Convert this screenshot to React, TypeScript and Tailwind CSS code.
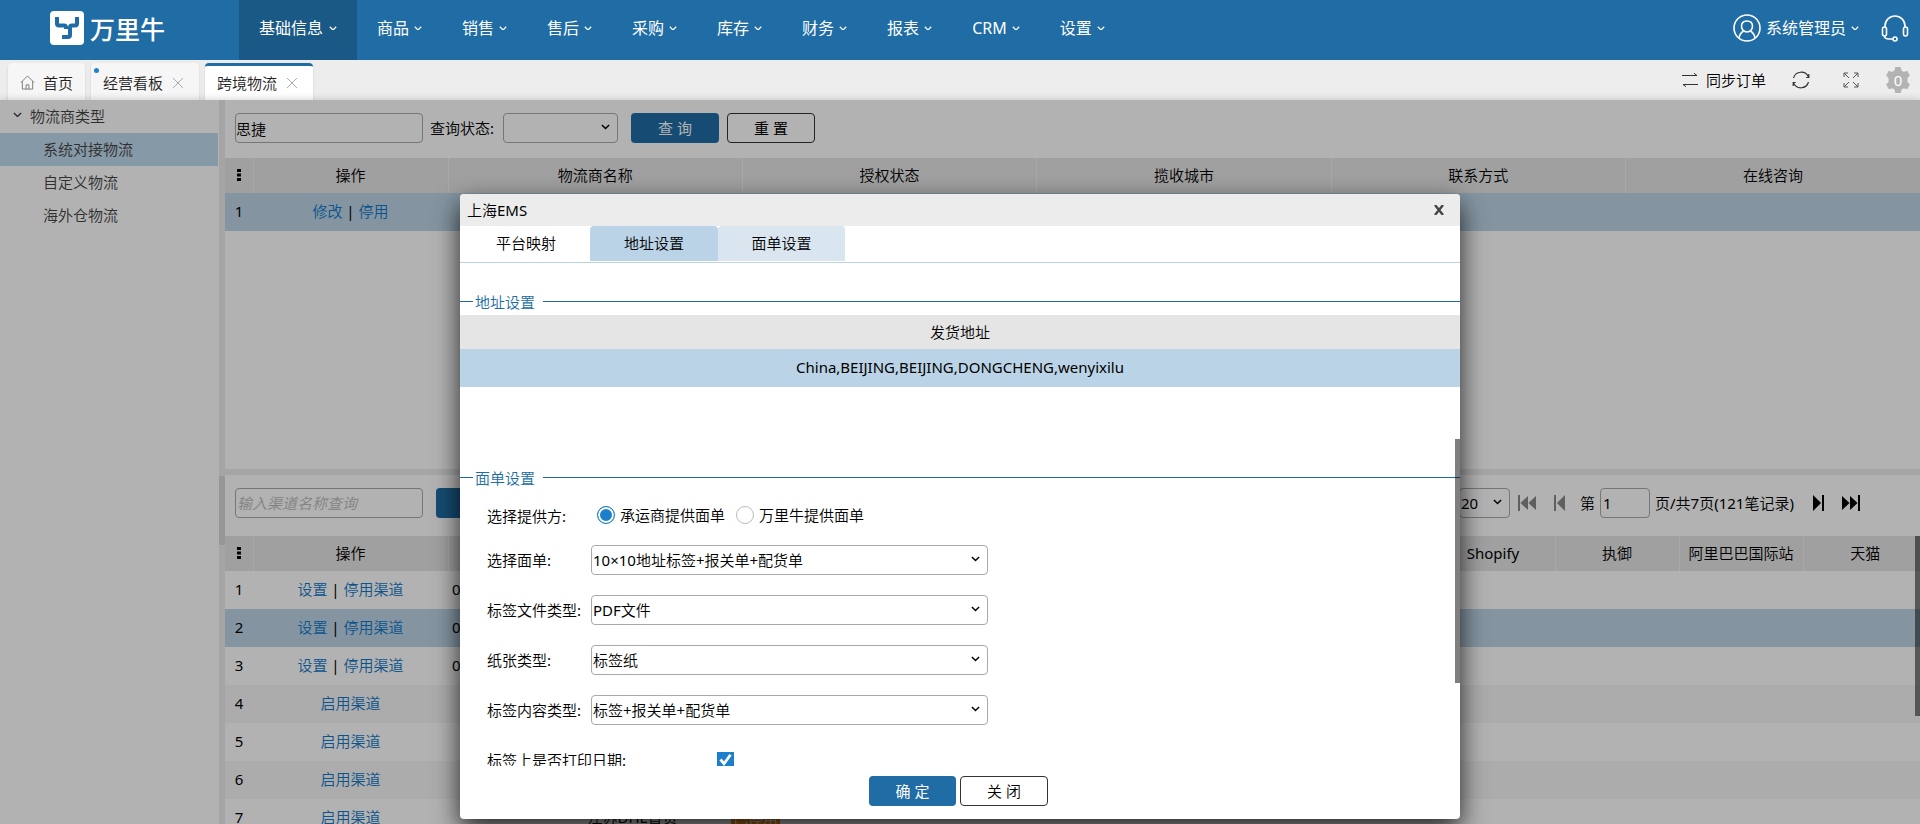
import { useState } from "react";
import type { ReactNode } from "react";

type NavItem = { name: string; active?: boolean };

type FormRow = { id: string; label: string; value: string };

const navItems: NavItem[] = [
  { name: "基础信息", active: true },
  { name: "商品" },
  { name: "销售" },
  { name: "售后" },
  { name: "采购" },
  { name: "库存" },
  { name: "财务" },
  { name: "报表" },
  { name: "CRM" },
  { name: "设置" },
];

const logisticsTypes = ["系统对接物流", "自定义物流", "海外仓物流"];

const carrierColumns = ["物流商名称", "授权状态", "揽收城市", "联系方式", "在线咨询"];

const channels = [
  { id: 1, enabled: true },
  { id: 2, enabled: true },
  { id: 3, enabled: true },
  { id: 4, enabled: false },
  { id: 5, enabled: false },
  { id: 6, enabled: false },
  { id: 7, enabled: false, name: "江苏DHL普货", status: "已停用" },
];

const formRows: FormRow[] = [
  { id: "template", label: "选择面单:", value: "10×10地址标签+报关单+配货单" },
  { id: "fileType", label: "标签文件类型:", value: "PDF文件" },
  { id: "paper", label: "纸张类型:", value: "标签纸" },
  { id: "content", label: "标签内容类型:", value: "标签+报关单+配货单" },
];

function Chevron({ className }: { className?: string }) {
  return (
    <svg viewBox="0 0 10 6" fill="none" stroke="currentColor" strokeWidth="1.6" className={className}>
      <path d="M1 1l4 4 4-4" />
    </svg>
  );
}

function Logo() {
  return (
    <a href="#" className="flex w-[239px] shrink-0 items-center gap-1.5 pb-1 pl-[50px] text-white">
      <svg viewBox="0 0 34 34" className="size-[34px]">
        <rect width="34" height="34" rx="4" fill="#fff" />
        <path
          d="M7 6v6.500q0 2 2 2h5q2 0 2 2V18M27 6v6.500q0 2-2 2h-3q-2 0-2 2V24q0 2-2 2h-6"
          fill="none"
          stroke="#206ca5"
          strokeWidth="4"
        />
      </svg>
      <span className="font-['Noto_Sans_CJK_SC',sans-serif] text-[25px] leading-none font-medium">万里牛</span>
    </a>
  );
}

function Header() {
  return (
    <header className="flex h-[60px] shrink-0 bg-[#206ca5] font-['Noto_Sans','Noto_Sans_CJK_SC',sans-serif] text-base text-white">
      <Logo />
      <nav className="flex flex-1">
        {navItems.map(({ name, active }) => (
          <a
            key={name}
            href="#"
            className={`flex items-center px-5 pb-1 ${active ? "gap-1.5 bg-[#1a5986]" : "gap-[5px]"}`}
          >
            {name}
            <Chevron className="w-2" />
          </a>
        ))}
      </nav>
      <div className="flex items-center gap-[22px] pr-[11px] pb-1">
        <button className="flex items-center gap-[5px]">
          <svg viewBox="0 0 28 28" fill="none" stroke="currentColor" strokeWidth="1.6" className="size-7">
            <circle cx="14" cy="14" r="13" />
            <path d="M14 7c3.500 0 5.500 2.300 5.500 5.300S17.200 18 14 18s-5.500-2.700-5.500-5.700S10.500 7 14 7z" />
            <path d="M10.500 17C8 18.500 6.500 20.500 6 24M17.500 17c2.500 1.500 4 3.500 4.500 7" />
          </svg>
          系统管理员
          <Chevron className="w-2" />
        </button>
        <button aria-label="客服">
          <svg viewBox="0 0 28 28" fill="none" stroke="currentColor" strokeWidth="1.6" className="size-7">
            <path d="M4 13V12a10 10 0 0 1 20 0v1" />
            <rect x="1.500" y="13" width="4" height="9" rx="2" />
            <rect x="22.500" y="13" width="4" height="9" rx="2" />
            <path d="M3.500 22c0 2.200 2 3 4.500 3h3.700" />
            <circle cx="14" cy="25" r="2" />
          </svg>
        </button>
      </div>
    </header>
  );
}

function CloseIcon() {
  return (
    <svg viewBox="0 0 10 10" fill="none" stroke="#aaa" className="size-[10px]">
      <path d="M0 0l10 10M10 0L0 10" />
    </svg>
  );
}

function TabBar() {
  return (
    <div className="flex h-10 shrink-0 items-end gap-1.5 bg-[#ededed] pr-[7px] pl-2">
      <a
        href="#"
        className="flex h-[37px] items-center gap-2 rounded-t bg-[#f6f6f6] pt-0.5 pr-3 pl-3 shadow-sm"
      >
        <svg viewBox="0 0 16 16" fill="none" stroke="#777" className="size-[15px]">
          <path d="M1 8l7-7 7 7M2.500 6.500v8.500h11V6.500M6.500 15v-4.500h3V15" />
        </svg>
        首页
      </a>
      <div className="relative flex h-[37px] items-center gap-[10px] rounded-t bg-[#f6f6f6] pt-0.5 pr-4 pl-3 shadow-sm">
        <span className="absolute top-[5px] left-[3px] size-[5px] rounded-full bg-[#1f82ce]" />
        <a href="#">经营看板</a>
        <button aria-label="关闭经营看板">
          <CloseIcon />
        </button>
      </div>
      <div className="flex h-[37px] items-center gap-[10px] rounded-t border-t-3 border-[#206ca5] bg-white pr-4 pb-px pl-3 shadow-sm">
        <a href="#">跨境物流</a>
        <button aria-label="关闭跨境物流">
          <CloseIcon />
        </button>
      </div>
      <div className="ml-auto flex h-10 items-center text-black">
        <button className="flex items-center gap-2">
          <svg viewBox="0 0 16 14" fill="none" stroke="#333" className="h-[14px] w-4">
            <path d="M0 2.500h15l-3-2.200M16 11.500H1l3 2.200" />
          </svg>
          同步订单
        </button>
        <button aria-label="刷新" className="ml-[26px]">
          <svg viewBox="0 0 18 18" fill="none" stroke="#333" strokeWidth="1.2" className="size-[18px]">
            <path d="M1.500 7A8 8 0 0 1 16.500 6M16.500 11A8 8 0 0 1 1.500 12M16.800 3v3.500h-2.500M1.200 15v-3.500h2.500" />
          </svg>
        </button>
        <button aria-label="全屏" className="ml-[33px]">
          <svg viewBox="0 0 16 16" fill="none" stroke="#555" className="size-4">
            <path d="M1 5V1h4M1 1l5 5M11 1h4v4M15 1l-5 5M1 11v4h4M1 15l5-5M15 11v4h-4M15 15l-5-5" />
          </svg>
        </button>
        <button className="relative ml-[24px] flex size-[30px] items-center justify-center text-white">
          <svg viewBox="0 0 24 24" fill="#b3b3b3" className="absolute size-[26px]">
            <path d="M9.500 0h5l.8 3.300 2 1.200 3.200-1 2.500 4.300-2.300 2.400v3.600l2.300 2.400-2.500 4.300-3.200-1-2 1.200-.8 3.300h-5l-.8-3.300-2-1.200-3.200 1L1 16.200l2.300-2.400v-3.600L1 7.800l2.500-4.300 3.200 1 2-1.200z" />
          </svg>
          <span className="relative">0</span>
        </button>
      </div>
    </div>
  );
}

function SelectBox({ id, value, className, label }: { id: string; value: string; className: string; label?: string }) {
  return (
    <span className={`relative inline-flex items-center ${className}`}>
      <select
        id={id}
        aria-label={label}
        className="h-[30px] w-full appearance-none rounded border border-[#aaa] bg-white pl-px text-black"
      >
        <option>{value}</option>
      </select>
      <Chevron className="pointer-events-none absolute right-2 mb-0.5 w-[9px]" />
    </span>
  );
}

function Sidebar() {
  return (
    <aside className="w-[219px] shrink-0 bg-white pr-px text-[#444]">
      <button className="flex h-[33px] w-full items-center gap-2 pb-0.5 pl-[13px]">
        <Chevron className="mb-0.5 w-[9px]" />
        物流商类型
      </button>
      <ul>
        {logisticsTypes.map((name, i) => (
          <li key={name}>
            <a
              href="#"
              className={`flex h-[33px] items-center pb-0.5 pl-[43px] ${i === 0 ? "bg-[#c1dbee]" : ""}`}
            >
              {name}
            </a>
          </li>
        ))}
      </ul>
    </aside>
  );
}

function KebabCell() {
  return (
    <th scope="col" aria-label="列设置" className="border-r border-[#f3f3f3] pb-0.5">
      <svg viewBox="0 0 4 12" className="mx-auto h-3 w-1">
        <path d="M0 0h4v3H0zM0 4.500h4v3H0zM0 9h4v3H0z" />
      </svg>
    </th>
  );
}

function HeadCell({ children }: { children?: ReactNode }) {
  return (
    <th scope="col" className="border-r border-[#f3f3f3] pb-0.5 text-center font-normal last:border-r-0">
      {children}
    </th>
  );
}

function CarrierPanel() {
  return (
    <section className="h-[369px] shrink-0 bg-white">
      <div className="flex h-[58px] items-center px-[10px] pb-0.5">
        <input
          aria-label="物流商名称"
          defaultValue="思捷"
          className="h-[30px] w-[188px] rounded border border-[#aaa]"
        />
        <label htmlFor="status" className="ml-[7px]">
          查询状态:
        </label>
        <SelectBox id="status" value="" className="ml-[9px] w-[115px]" />
        <button className="ml-[13px] h-[30px] w-[88px] rounded bg-[#206ca5] font-['Noto_Sans','Noto_Sans_CJK_SC',sans-serif] text-white">
          查 询
        </button>
        <button className="ml-2 h-[30px] w-[88px] rounded border border-[#333] font-['Noto_Sans','Noto_Sans_CJK_SC',sans-serif]">
          重 置
        </button>
      </div>
      <table className="w-full table-fixed">
        <colgroup>
          <col className="w-7" />
          <col className="w-[195px]" />
          <col span={5} />
        </colgroup>
        <thead>
          <tr className="h-[35px] bg-[#e5e5e5]">
            <KebabCell />
            <HeadCell>操作</HeadCell>
            {carrierColumns.map((name) => (
              <HeadCell key={name}>{name}</HeadCell>
            ))}
          </tr>
        </thead>
        <tbody>
          <tr className="h-[38px] bg-[#bdd6e7]">
            <td className="pb-0.5 text-center">1</td>
            <td className="pb-0.5 text-center">
              <a href="#" className="text-[#1279c8]">修改</a> | <a href="#" className="text-[#1279c8]">停用</a>
            </td>
            <td colSpan={5} />
          </tr>
        </tbody>
      </table>
    </section>
  );
}

function Pager() {
  return (
    <div className="ml-auto flex items-center">
      <SelectBox id="pageSize" label="每页条数" value="20" className="w-[51px]" />
      <button aria-label="首页" className="ml-2 text-[#888]">
        <svg viewBox="0 0 18 16" fill="currentColor" className="h-4 w-[18px]">
          <path d="M0 0h2v16H0zM10 1v14L2.500 8zM18 1v14l-7.500-7z" />
        </svg>
      </button>
      <button aria-label="上一页" className="ml-[18px] text-[#888]">
        <svg viewBox="0 0 11 16" fill="currentColor" className="h-4 w-[11px]">
          <path d="M0 0h2v16H0zM11 0v16L3 8z" />
        </svg>
      </button>
      <label htmlFor="page" className="ml-[15px]">
        第
      </label>
      <input
        id="page"
        defaultValue="1"
        className="ml-[5px] h-[30px] w-[50px] rounded border border-[#aaa] pl-0.5"
      />
      <span className="ml-[5px] w-[142px]">页/共7页(121笔记录)</span>
      <button aria-label="下一页" className="ml-4">
        <svg viewBox="0 0 11 16" fill="currentColor" className="h-4 w-[11px]">
          <path d="M9 0h2v16H9zM0 0v16l8-8z" />
        </svg>
      </button>
      <button aria-label="末页" className="ml-[18px]">
        <svg viewBox="0 0 18 16" fill="currentColor" className="h-4 w-[18px]">
          <path d="M16 0h2v16h-2zM0 1v14l7.500-7zM8 1v14l7.500-7z" />
        </svg>
      </button>
    </div>
  );
}

function ChannelPanel() {
  return (
    <section className="relative min-h-0 flex-1 overflow-hidden bg-white">
      <div className="flex h-[61px] items-center pr-[60px] pb-[5px] pl-[10px]">
        <input
          aria-label="渠道名称"
          placeholder="输入渠道名称查询"
          className="h-[30px] w-[188px] rounded border border-[#aaa] pl-px placeholder:text-[#bbb] placeholder:italic"
        />
        <button aria-label="查询渠道" className="ml-[13px] h-[30px] w-[88px] rounded bg-[#206ca5]" />
        <Pager />
      </div>
      <table className="w-[1702px] table-fixed">
        <colgroup>
          <col className="w-7" />
          <col className="w-[195px]" />
          <col className="w-[117px]" />
          <col className="w-[135px]" />
          <col className="w-[111px]" />
          <col />
          <col className="w-[124px]" />
          <col className="w-[124px]" />
          <col className="w-[124px]" />
          <col className="w-[124px]" />
        </colgroup>
        <thead>
          <tr className="h-[35px] bg-[#e5e5e5]">
            <KebabCell />
            <HeadCell>操作</HeadCell>
            <HeadCell />
            <HeadCell />
            <HeadCell />
            <HeadCell />
            <HeadCell>Shopify</HeadCell>
            <HeadCell>执御</HeadCell>
            <HeadCell>阿里巴巴国际站</HeadCell>
            <HeadCell>天猫</HeadCell>
          </tr>
        </thead>
        <tbody>
          {channels.map(({ id, enabled, name, status }) => (
            <tr
              key={id}
              className={`h-[38px] ${id === 2 ? "bg-[#bdd6e7]" : id > 3 && id % 2 === 0 ? "bg-[#f7f7f7]" : ""}`}
            >
              <td className="pb-0.5 text-center">{id}</td>
              <td className="pb-0.5 text-center">
                {enabled ? (
                  <>
                    <a href="#" className="text-[#1279c8]">设置</a> |{" "}
                    <a href="#" className="text-[#1279c8]">停用渠道</a>
                  </>
                ) : (
                  <a href="#" className="text-[#1279c8]">启用渠道</a>
                )}
              </td>
              <td className="pb-0.5 pl-1">{enabled ? "0" : ""}</td>
              <td className="pb-0.5 text-center">{name}</td>
              <td className="text-center">
                {status && (
                  <span className="inline-block bg-[#f28a1c] px-0.5 leading-6 text-white">{status}</span>
                )}
              </td>
              <td colSpan={5} />
            </tr>
          ))}
        </tbody>
      </table>
      {/* Scroll thumb */}
      <div className="absolute top-[61px] right-0 h-[180px] w-[5px] bg-black/50" />
    </section>
  );
}

function SectionTitle({ children }: { children: ReactNode }) {
  return (
    <h3 className="flex h-[27px] items-center text-[#206ca5]">
      <span className="mr-0.5 h-px w-[13px] bg-[#206ca5]" />
      {children}
      <span className="ml-2 h-px flex-1 bg-[#206ca5]" />
    </h3>
  );
}

function AddressDialog() {
  const [provider, setProvider] = useState("carrier");

  return (
    <div
      role="dialog"
      aria-label="上海EMS"
      className="absolute inset-x-0 top-[94px] bottom-[5px] mx-auto flex w-[1000px] flex-col overflow-hidden rounded bg-white text-black shadow-[0_10px_26px_rgba(0,0,0,0.8)]"
    >
      <div className="flex h-8 shrink-0 items-center justify-between bg-[#ececec] pr-4 pl-[7px]">
        <h2>上海EMS</h2>
        <button aria-label="关闭窗口" className="text-[#444]">
          <svg viewBox="0 0 10 10" fill="none" stroke="currentColor" strokeWidth="2.4" className="size-[10px]">
            <path d="M1 0l8 10M9 0L1 10" />
          </svg>
        </button>
      </div>
      <div role="tablist" className="flex h-[37px] shrink-0 border-b border-[#bad3e6] pb-px pl-0.5">
        <button role="tab" className="h-[35px] w-32 pb-0.5">平台映射</button>
        <button role="tab" className="h-[35px] w-32 rounded-t-sm bg-[#bad3e6] pb-0.5">地址设置</button>
        <button role="tab" className="h-[35px] w-[127px] rounded-t-sm bg-[#dae6ef] pb-0.5">面单设置</button>
      </div>
      <div className="relative min-h-0 flex-1 overflow-hidden">
        <div className="pt-[25px]">
          <SectionTitle>地址设置</SectionTitle>
          <table className="mb-[77px] w-full">
            <thead>
              <tr className="h-[34px] bg-[#e5e5e5]">
                <th scope="col" className="font-normal">发货地址</th>
              </tr>
            </thead>
            <tbody>
              <tr className="h-[38px] bg-[#bad3e6]">
                <td className="pb-0.5 text-center">China,BEIJING,BEIJING,DONGCHENG,wenyixilu</td>
              </tr>
            </tbody>
          </table>
          <SectionTitle>面单设置</SectionTitle>
          <div role="radiogroup" aria-label="选择提供方" className="flex h-11 items-center pt-1 pl-[27px]">
            <span className="w-[110px] pt-0.5">选择提供方:</span>
            <label className="flex items-center gap-[5px]">
              <input
                type="radio"
                name="provider"
                checked={provider === "carrier"}
                onChange={() => setProvider("carrier")}
                className="size-[18px] appearance-none rounded-full border border-[#bbb] checked:border-[#1c7fcb] checked:bg-[#1c7fcb] checked:shadow-[inset_0_0_0_2px_white]"
              />
              承运商提供面单
            </label>
            <label className="ml-[11px] flex items-center gap-[5px]">
              <input
                type="radio"
                name="provider"
                checked={provider === "wln"}
                onChange={() => setProvider("wln")}
                className="size-[18px] appearance-none rounded-full border border-[#bbb] checked:border-[#1c7fcb] checked:bg-[#1c7fcb] checked:shadow-[inset_0_0_0_2px_white]"
              />
              万里牛提供面单
            </label>
          </div>
          {formRows.map(({ id, label, value }) => (
            <div key={id} className="flex h-[50px] items-center pl-[27px]">
              <label htmlFor={id} className="w-[104px]">
                {label}
              </label>
              <SelectBox id={id} value={value} className="w-[397px]" />
            </div>
          ))}
          <div className="flex h-[50px] items-center pl-[27px]">
            <label htmlFor="printDate" className="w-[230px]">
              标签上是否打印日期:
            </label>
            <span className="relative flex">
              <input
                id="printDate"
                type="checkbox"
                defaultChecked
                className="peer size-[17px] appearance-none border border-[#bbb] checked:border-[#1c7fcb] checked:bg-[#1c7fcb]"
              />
              <svg
                viewBox="0 0 17 17"
                fill="none"
                stroke="#fff"
                strokeWidth="2.8"
                className="pointer-events-none absolute hidden size-[17px] peer-checked:block"
              >
                <path d="M3.500 7.500l3.500 4.200 6.500-9" />
              </svg>
            </span>
          </div>
        </div>
        {/* Scroll thumb */}
        <div className="absolute top-[176px] right-0 h-[244px] w-[5px] bg-black/50" />
      </div>
      <div className="flex h-[53px] shrink-0 items-start justify-center gap-1 pt-[10px] pr-[3px]">
        <button className="h-[30px] w-[87px] rounded bg-[#206ca5] font-['Noto_Sans','Noto_Sans_CJK_SC',sans-serif] text-white">
          确 定
        </button>
        <button className="h-[30px] w-[88px] rounded border border-[#333]">关 闭</button>
      </div>
    </div>
  );
}

export default function App() {
  return (
    <div className="flex h-screen flex-col overflow-hidden font-['Noto_Sans','Noto_Sans_CJK_SC_DemiLight','Noto_Sans_CJK_SC_Light','Noto_Sans_CJK_SC',sans-serif] text-[15px] leading-5 text-[#222]">
      <Header />
      <TabBar />
      <main className="relative flex min-h-0 flex-1 text-black shadow-[0_0_8px_rgba(0,0,0,0.2)]">
        <Sidebar />
        {/* Splitter */}
        <div className="w-1.5 shrink-0 bg-[#ececec] pt-[376px]">
          <div className="h-[69px] bg-[#d8d8d8]" />
        </div>
        <div className="flex min-w-0 flex-1 flex-col gap-1.5 bg-[#ececec]">
          <CarrierPanel />
          <ChannelPanel />
        </div>
        {/* Mask */}
        <div className="absolute inset-0 overflow-hidden bg-black/30">
          <AddressDialog />
        </div>
      </main>
    </div>
  );
}
